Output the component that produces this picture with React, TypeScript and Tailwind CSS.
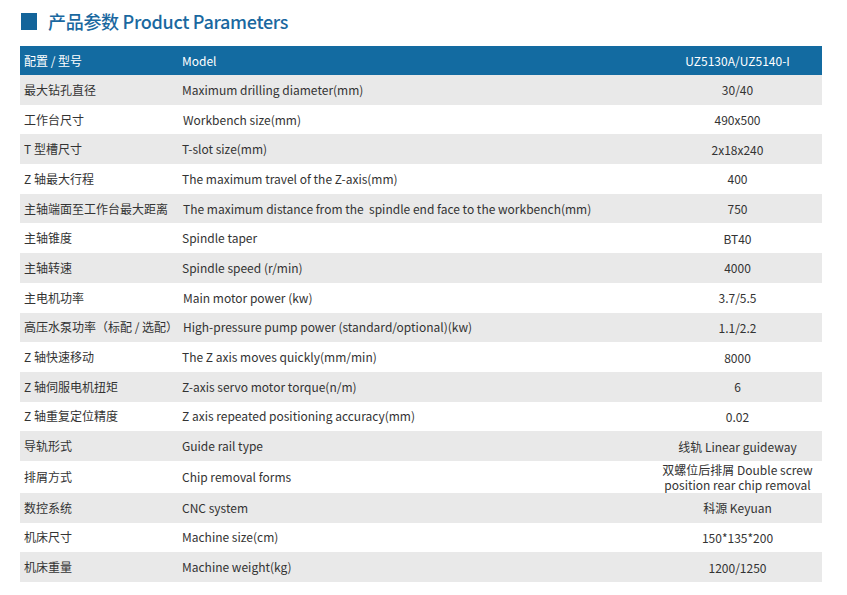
const rows: { cn: string; en: string; val: string[]; shift?: boolean; tall?: boolean }[] = [
  { cn: "最大钻孔直径", en: "Maximum drilling diameter(mm)", val: ["30/40"] },
  { cn: "工作台尺寸", en: "Workbench size(mm)", val: ["490x500"], shift: true },
  { cn: "T 型槽尺寸", en: "T-slot size(mm)", val: ["2x18x240"] },
  { cn: "Z 轴最大行程", en: "The maximum travel of the Z-axis(mm)", val: ["400"] },
  {
    cn: "主轴端面至工作台最大距离",
    en: "The maximum distance from the  spindle end face to the workbench(mm)",
    val: ["750"],
    shift: true,
  },
  { cn: "主轴锥度", en: "Spindle taper", val: ["BT40"] },
  { cn: "主轴转速", en: "Spindle speed (r/min)", val: ["4000"] },
  { cn: "主电机功率", en: "Main motor power (kw)", val: ["3.7/5.5"], shift: true },
  {
    cn: "高压水泵功率（标配 / 选配）",
    en: "High-pressure pump power (standard/optional)(kw)",
    val: ["1.1/2.2"],
    shift: true,
  },
  { cn: "Z 轴快速移动", en: "The Z axis moves quickly(mm/min)", val: ["8000"] },
  { cn: "Z 轴伺服电机扭矩", en: "Z-axis servo motor torque(n/m)", val: ["6"] },
  { cn: "Z 轴重复定位精度", en: "Z axis repeated positioning accuracy(mm)", val: ["0.02"] },
  { cn: "导轨形式", en: "Guide rail type", val: ["线轨 Linear guideway"] },
  {
    cn: "排屑方式",
    en: "Chip removal forms",
    val: ["双螺位后排屑 Double screw", "position rear chip removal"],
    tall: true,
  },
  { cn: "数控系统", en: "CNC system", val: ["科源 Keyuan"] },
  { cn: "机床尺寸", en: "Machine size(cm)", val: ["150*135*200"] },
  { cn: "机床重量", en: "Machine weight(kg)", val: ["1200/1250"] },
];

export default function App() {
  return (
    <div className="w-[847px] h-[595px] bg-white font-['Noto_Sans_CJK_SC','Noto_Sans',sans-serif] text-[#333]">
      {/* title */}
      <div className="flex items-start gap-[11px] pl-[21px] pt-[13px] h-[46px]">
        <div className="w-[16px] h-[17px] bg-[#13649a]" />
        <h1 className="text-[18px] leading-[17px] text-[#1a68a0] font-medium tracking-[-0.3px] whitespace-pre">
          产品参数 Product Parameters
        </h1>
      </div>

      {/* table */}
      <div className="ml-[20px] w-[802px] text-[12px]">
        <div className="grid grid-cols-[158px_475px_169px] h-[29px] items-center bg-[#136ba1] text-white">
          <div className="pl-[4px]">配置 / 型号</div>
          <div className="pl-[4px]">Model</div>
          <div className="text-center">UZ5130A/UZ5140-I</div>
        </div>
        {rows.map((r, i) => (
          <div
            key={r.cn}
            className={
              "grid grid-cols-[158px_475px_169px] items-center " +
              (r.tall ? "h-[32px] " : "h-[29.7px] ") +
              (i % 2 === 0 ? "bg-[#e9e9e9]" : "bg-white")
            }
          >
            <div className="pl-[4px] whitespace-pre">{r.cn}</div>
            <div className={(r.shift ? "pl-[5px]" : "pl-[4px]") + " whitespace-pre"}>{r.en}</div>
            <div className="text-center leading-[15px]">
              {r.val.map((v) => (
                <div key={v}>{v}</div>
              ))}
            </div>
          </div>
        ))}
      </div>
    </div>
  );
}
